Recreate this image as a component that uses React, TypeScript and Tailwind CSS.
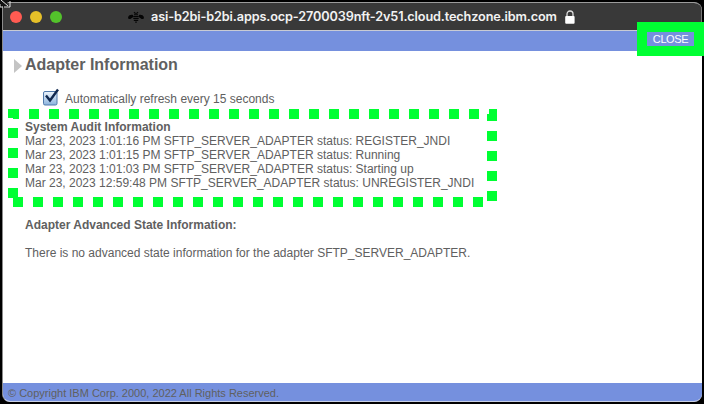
import React from 'react';

const range = (start: number, end: number, step = 20) => {
  const out: number[] = [];
  for (let v = start; v <= end; v += step) out.push(v);
  return out;
};

const logs = [
  'Mar 23, 2023 1:01:16 PM SFTP_SERVER_ADAPTER status: REGISTER_JNDI',
  'Mar 23, 2023 1:01:15 PM SFTP_SERVER_ADAPTER status: Running',
  'Mar 23, 2023 1:01:03 PM SFTP_SERVER_ADAPTER status: Starting up',
  'Mar 23, 2023 12:59:48 PM SFTP_SERVER_ADAPTER status: UNREGISTER_JNDI',
];

function Bee() {
  return (
    <svg className="ml-[66px] h-3 w-4 shrink-0" viewBox="0 0 16 12" fill="#050505">
      <path d="M5.200 4.200C3.500 3.200.8 4 .2 6c-.5 1.800.8 2.500 2.200 1.900L5.200 6zM10.800 4.200c1.700-1 4.400-.2 5 1.800.5 1.800-.8 2.500-2.200 1.900L10.800 6z" />
      <path d="M6 1.200 7 2.300h2l1-1.100M6 3.700h4M5.300 5.600h5.400M5.300 7.500h5.400M5.800 9.400h4.400M7.200 11.100h1.600" stroke="#050505" strokeWidth="1.100" fill="none" />
    </svg>
  );
}

function Lock() {
  return (
    <svg className="ml-2 h-[14px] w-[10px] shrink-0" viewBox="0 0 10 14">
      <path d="M2 7V4a3 3 0 0 1 6 0v3" fill="none" stroke="#dedede" strokeWidth="1.300" />
      <rect x="0.200" y="6" width="9.400" height="7.700" rx="1" fill="#fff" />
    </svg>
  );
}

function DashedFrame() {
  return (
    <svg className="pointer-events-none absolute left-0 top-0 h-[404px] w-[704px]" viewBox="0 0 704 404" fill="#00ff33" shapeRendering="crispEdges">
      <path d="M8 109h11v10h-6v-1H8zM489 109h8v12h-10v-7h2z" />
      {range(29, 469).map((x) => <rect key={`t${x}`} x={x} y={109} width={10} height={10} />)}
      {range(13, 473).map((x) => <rect key={`b${x}`} x={x} y={197} width={10} height={10} />)}
      {range(128, 188).map((y) => <rect key={`l${y}`} x={8} y={y} width={10} height={10} />)}
      {range(131, 191).map((y) => <rect key={`r${y}`} x={487} y={y} width={10} height={10} />)}
    </svg>
  );
}

export default function App() {
  return (
    <div className="relative h-[404px] w-[704px] overflow-hidden bg-black pl-[2px] pt-[2px] font-['Liberation_Sans',Arial,sans-serif] text-[12px] leading-[14px] text-[#606060]">
      <div className="flex h-[400px] w-[700px] flex-col overflow-hidden rounded-b-[8px] rounded-tr-[8px] border-b border-l border-t border-b-[#c9d0e4] border-l-[#8c8c8c] border-t-[#9c9c9c] bg-white">
        <header className="flex h-[28px] shrink-0 items-center border-b border-r border-b-[#c8cbd4] border-r-[#777] bg-[#393939] pl-[7px]">
          <div className="flex gap-2">
            <span className="h-3 w-3 rounded-full bg-[#ff5b52]" />
            <span className="h-3 w-3 rounded-full bg-[#e6c029]" />
            <span className="h-3 w-3 rounded-full bg-[#53c22b]" />
          </div>
          <Bee />
          <span className="ml-[7px] w-[406px] whitespace-nowrap font-[Inter,sans-serif] text-[12.700px] font-semibold leading-4 tracking-[-0.130px] text-[#f2f2f2]">asi-b2bi-b2bi.apps.ocp-2700039nft-2v51.cloud.techzone.ibm.com</span>
          <Lock />
        </header>
        <div className="h-5 shrink-0 bg-[#7590de]" />
        <main className="flex-1 pl-[22px]">
          <div className="-ml-[11px] flex h-[27px] items-center">
            <svg className="mt-[3px] h-[14px] w-2" viewBox="0 0 8 14"><path d="M0 0 8 7 0 14z" fill="#c4c4c4" /></svg>
            <h1 className="ml-[3px] whitespace-nowrap text-[16px] font-bold leading-5">Adapter Information</h1>
          </div>
          <label className="ml-[18px] mt-[10px] flex h-[18px] items-center">
            <svg className="h-[18px] w-[17px]" viewBox="0 0 17 18">
              <defs><linearGradient id="box" x2="0" y2="1"><stop stopColor="#eef5fc" /><stop offset="1" stopColor="#8bb3de" /></linearGradient></defs>
              <rect x=".5" y="3.500" width="13.500" height="13.500" rx="1.500" fill="url(#box)" stroke="#5079ab" />
              <path d="m3 7.500 4 5 8-11" fill="none" stroke="#10284f" strokeWidth="2.400" />
            </svg>
            <span className="ml-[5px] mt-[3px] whitespace-nowrap">Automatically refresh every 15 seconds</span>
          </label>
          <section className="mt-[14px] whitespace-nowrap">
            <h2 className="font-bold">System Audit Information</h2>
            {logs.map((line) => <p key={line}>{line}</p>)}
          </section>
          <section className="mt-[28px] whitespace-nowrap">
            <h2 className="font-bold">Adapter Advanced State Information:</h2>
            <p className="mt-[14px]">There is no advanced state information for the adapter SFTP_SERVER_ADAPTER.</p>
          </section>
        </main>
        <footer className="flex h-[18px] shrink-0 items-center whitespace-nowrap bg-[#7590de] pl-[5px] pt-[2px] text-[11px]">© Copyright IBM Corp. 2000, 2022 All Rights Reserved.</footer>
      </div>
      <DashedFrame />
      <div className="absolute left-[637px] top-[22px] flex h-[34px] w-[67px] items-center bg-[#00ff33] pl-[10px]">
        <button className="h-[14px] w-[47px] whitespace-nowrap bg-[#7590de] text-center text-[11px] leading-[13px] tracking-[-0.400px] text-white">CLOSE</button>
      </div>
      <svg className="absolute left-0 top-0 h-[8px] w-[11px]" viewBox="0 0 11 8">
        <path d="M0 0h9v1L6 4l3 2v1.500H3L0 3z" fill="#111" /><path d="m1 0 7 6M10 1v6H4M0 4v3h3" fill="none" stroke="#e5e5e5" />
      </svg>
    </div>
  );
}
